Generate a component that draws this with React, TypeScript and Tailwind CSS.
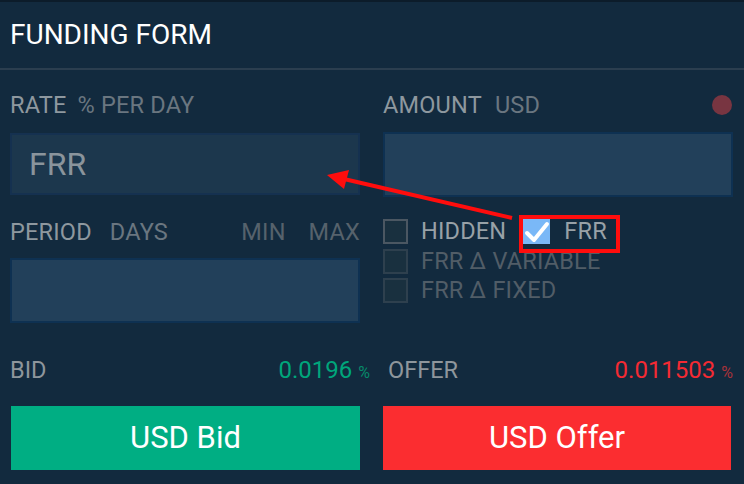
import React from 'react';

const Label = ({ main, sub, gap = 'gap-[12px]' }: { main: string; sub?: string; gap?: string }) => (
	<div className={`flex h-[22px] items-start text-[23.5px] leading-none tracking-[0.2px] ${gap}`}>
		<span className="text-[#8e989f]">{main}</span>
		{sub && <span className="text-[#6a7680]">{sub}</span>}
	</div>
);

const Check = ({ checked, dim }: { checked?: boolean; dim?: boolean }) => {
	if (checked) {
		return (
			<div className="w-[27px] h-[25px] bg-[#7ab8f7] relative">
				<svg width="27" height="25" viewBox="0 0 27 25" className="absolute inset-0">
					<path d="M4 14 L11 21 L24 5" fill="none" stroke="#ffffff" strokeWidth="4" strokeLinecap="round" strokeLinejoin="round" />
				</svg>
			</div>
		);
	}
	return (
		<div
			className={`w-[25px] h-[25px] border-2 bg-[#19303f] ${dim ? 'border-[#2e404e]' : 'border-[#4b5762]'}`}
		/>
	);
};

const App = () => {
	return (
		<div
			className="relative w-[744px] h-[484px] overflow-hidden bg-[#122a3e] border-t-2 border-[#0c1c2a]"
			style={{ fontFamily: 'Roboto, "Liberation Sans", sans-serif' }}
		>
			<div className="h-[68px] border-b-2 border-[#2b3e4f] px-[10px] pt-[19px] text-[28px] leading-none text-white">
				FUNDING FORM
			</div>

			<div className="grid grid-cols-2 gap-x-[23px] pl-[10px] pr-[11px]">
				{/* rate */}
				<div className="flex flex-col pt-[24px]">
					<Label main="RATE" sub="% PER DAY" gap="gap-[11px]" />
					<div className="mt-[17px] h-[62px] border-2 border-[#153150] bg-[#1c374d] flex items-center px-[17px] text-[32px] leading-none text-[#8a949c]">
						FRR
					</div>
				</div>

				{/* amount */}
				<div className="flex flex-col pt-[24px]">
					<div className="flex justify-between">
						<Label main="AMOUNT" sub="USD" gap="gap-[13px]" />
						<div className="w-[20px] h-[20px] rounded-full bg-[#783541] mt-[1px] mr-[1px]" />
					</div>
					<div className="mt-[16px] h-[65px] border-2 border-[#0e3152] bg-[#22405a]" />
				</div>

				{/* period */}
				<div className="flex flex-col">
					<div className="mt-[24px] flex h-[22px] text-[23.5px] leading-none tracking-[0.2px]">
						<span className="text-[#8e989f]">PERIOD</span>
						<span className="ml-[18px] text-[#6a7680]">DAYS</span>
						<span className="ml-auto text-[#56626c]">MIN</span>
						<span className="ml-[23px] text-[#56626c]">MAX</span>
					</div>
					<div className="mt-[15px] h-[65px] border-2 border-[#0e3152] bg-[#22405a]" />
				</div>

				{/* flags */}
				<div className="flex flex-col pt-[22px] text-[23.5px] leading-none tracking-[0.2px]">
					<div className="flex items-center h-[25px]">
						<Check />
						<span className="ml-[13px] text-[#98a1a7]">HIDDEN</span>
						<div className="ml-[17px]">
							<Check checked />
						</div>
						<span className="ml-[14px] text-[#98a1a7]">FRR</span>
					</div>
					<div className="flex items-center h-[25px] mt-[5px]">
						<Check dim />
						<span className="ml-[13px] text-[#515d67]">FRR Δ VARIABLE</span>
					</div>
					<div className="flex items-center h-[25px] mt-[4px]">
						<Check dim />
						<span className="ml-[13px] text-[#515d67]">FRR Δ FIXED</span>
					</div>
				</div>

				{/* bid */}
				<div className="flex flex-col mt-[35px]">
					<div className="flex items-baseline justify-between -mr-[10px] leading-none">
						<span className="text-[23.5px] text-[#8e969c]">BID</span>
						<span className="text-[24px] text-[#00a67b]">
							0.0196 <span className="text-[16px] text-[#07896a]">%</span>
						</span>
					</div>
					<button className="mt-[23px] ml-[1px] h-[64px] bg-[#00ae83] text-white text-[31px] leading-none">
						USD Bid
					</button>
				</div>

				{/* offer */}
				<div className="flex flex-col mt-[35px]">
					<div className="flex items-baseline justify-between leading-none">
						<span className="ml-[5px] text-[23.5px] text-[#8e969c]">OFFER</span>
						<span className="text-[24px] text-[#f42a33]">
							0.011503 <span className="text-[16px] text-[#a8323a]">%</span>
						</span>
					</div>
					<button className="mt-[23px] mr-[2px] h-[64px] bg-[#fb2d30] text-white text-[31px] leading-none">
						USD Offer
					</button>
				</div>
			</div>

			{/* annotation overlay */}
			<svg className="absolute left-0 top-0 pointer-events-none" width="744" height="484" viewBox="0 0 744 484">
				<line x1="512" y1="216" x2="344" y2="177" stroke="#ff0d0d" strokeWidth="4" />
				<polygon points="327,173 349,168 344,187" fill="#ff0d0d" />
				<rect x="521" y="215" width="97" height="34" fill="none" stroke="#ff0d0d" strokeWidth="4" />
			</svg>
		</div>
	);
};

export default App;
